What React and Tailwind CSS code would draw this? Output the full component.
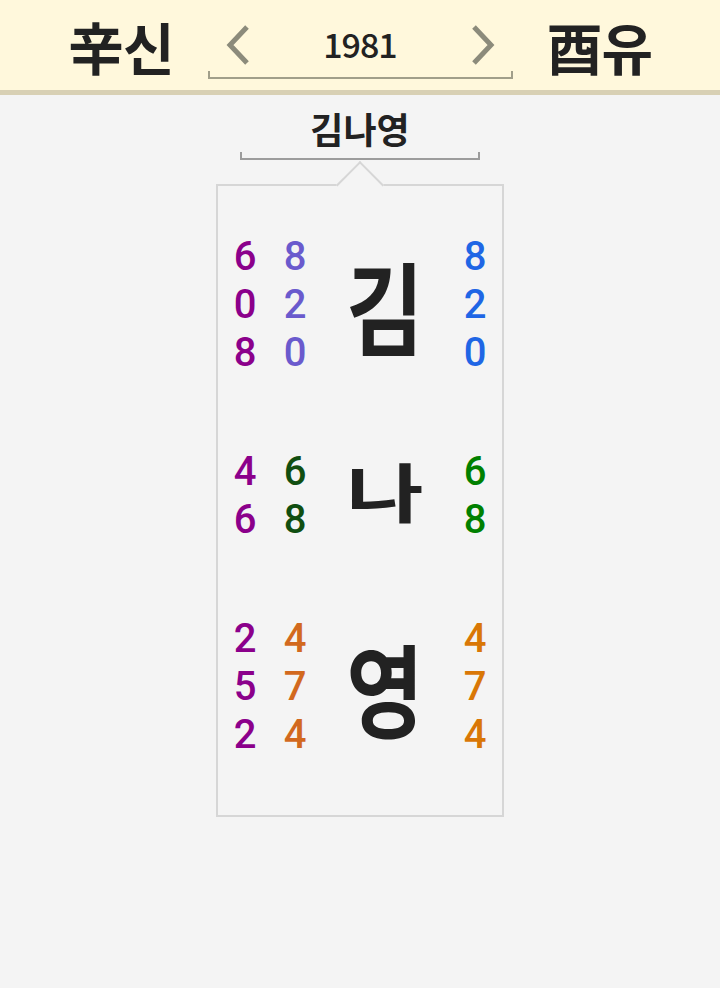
import { useState } from "react";

const KR = { fontFamily: '"Noto Sans CJK KR", "Noto Sans", sans-serif' };
const NUM = { fontFamily: 'Roboto, "Noto Sans", sans-serif' };

const rows = [
  {
    char: "김",
    scale: "scale-y-[1.2]",
    left: { color: "text-[#8b008b]", nums: [6, 0, 8] },
    mid: { color: "text-[#6a5acd]", nums: [8, 2, 0] },
    right: { color: "text-[#1f66e5]", nums: [8, 2, 0] },
  },
  {
    char: "나",
    scale: "scale-y-[0.76] -translate-y-[6px]",
    left: { color: "text-[#8b008b]", nums: [4, 6] },
    mid: { color: "text-[#104e10]", nums: [6, 8] },
    right: { color: "text-[#008000]", nums: [6, 8] },
  },
  {
    char: "영",
    scale: "scale-y-[1.2]",
    left: { color: "text-[#8b008b]", nums: [2, 5, 2] },
    mid: { color: "text-[#d2691e]", nums: [4, 7, 4] },
    right: { color: "text-[#d97706]", nums: [4, 7, 4] },
  },
];

function NumCol({ col }) {
  return (
    <div className={`flex flex-col items-center text-[40px] font-medium leading-[48px] ${col.color}`} style={NUM}>
      {col.nums.map((n, i) => (
        <span key={i}>{n}</span>
      ))}
    </div>
  );
}

function Chevron({ dir }) {
  const pts = dir === "left" ? "21,3 4,21 21,39" : "3,3 20,21 3,39";
  return (
    <svg width="24" height="42" viewBox="0 0 24 42">
      <polyline points={pts} fill="none" stroke="#8c8b7b" strokeWidth="5" />
    </svg>
  );
}

export default function App() {
  const [year, setYear] = useState(1981);

  return (
    <div className="min-h-[988px] bg-[#f4f4f4] text-[#222]" style={KR}>
      {/* 상단 연도 바 */}
      <div className="h-[90px] bg-[#fff8dc] border-b-[5px] border-[#d8d0b4] flex items-center justify-center gap-[34px] box-content">
        <div className="text-[56px] font-bold leading-none tracking-[-1px] pt-[2px]">辛신</div>
        <div className="w-[305px] flex flex-col pt-[8px]">
          <div className="flex items-center justify-between px-[18px] h-[52px]">
            <button onClick={() => setYear(year - 1)}>
              <Chevron dir="left" />
            </button>
            <span className="text-[34px] font-medium leading-none tracking-[-1px] pb-[2px]">{year}</span>
            <button onClick={() => setYear(year + 1)}>
              <Chevron dir="right" />
            </button>
          </div>
          <div className="h-[8px] border-x-2 border-b-2 border-[#a19f8a]" />
        </div>
        <div className="text-[56px] font-bold leading-none tracking-[-1px] pt-[2px]">酉유</div>
      </div>

      {/* 이름 */}
      <div className="flex flex-col items-center pt-[9px]">
        <div className="text-[36px] font-semibold leading-[48px]">김나영</div>
        <div className="w-[240px] h-[8px] border-x-2 border-b-2 border-[#9c9c9c]" />
      </div>

      {/* 카드 */}
      <div className="relative w-[288px] mx-auto mt-[24px] border-2 border-[#d6d6d6] pt-[23px] pb-[33px]">
        <div className="absolute -top-[18px] left-1/2 -translate-x-1/2 w-[34px] h-[34px] rotate-45 border-l-2 border-t-2 border-[#d6d6d6] bg-[#f4f4f4]" />
        {rows.map((row) => (
          <div
            key={row.char}
            className="h-[191px] grid grid-cols-[40px_40px_1fr_40px] gap-x-[10px] px-[7px] items-center"
          >
            <NumCol col={row.left} />
            <NumCol col={row.mid} />
            <div className="flex justify-center">
              <span className={`text-[84px] font-bold leading-none ${row.scale}`}>{row.char}</span>
            </div>
            <NumCol col={row.right} />
          </div>
        ))}
      </div>
    </div>
  );
}
